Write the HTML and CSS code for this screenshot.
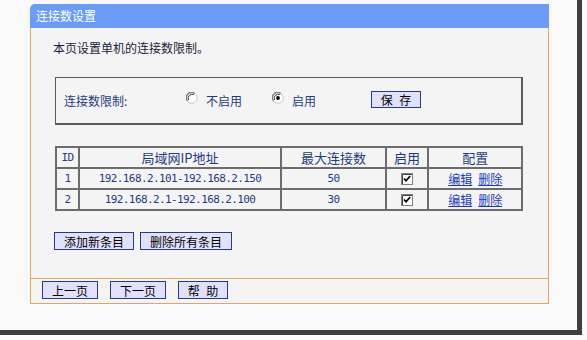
FILE: index.html
```html
<!DOCTYPE html>
<html lang="zh-CN">
<head>
  <meta charset="UTF-8" />
  <title>连接数设置</title>
  <link rel="stylesheet" href="styles.css">
</head>
<body>
  <div class="screen">
    <div class="panel">
      <div class="panel-title">连接数设置</div>

      <div class="panel-body">
        <p class="intro">本页设置单机的连接数限制。</p>

        <div class="limit-box">
          <span class="label">连接数限制:</span>
          <label class="radio radio-off">
            <svg width="12" height="12" viewBox="0 0 12 12">
              <circle cx="6" cy="6" r="5.3" fill="#fff" stroke="#c8c8c8" stroke-width="1"/>
              <path d="M1.5 8.8 A5.2 5.2 0 0 1 8.8 1.5" fill="none" stroke="#7a7a7a" stroke-width="1.3"/>
              <path d="M2.6 7.9 A4 4 0 0 1 7.9 2.6" fill="none" stroke="#303030" stroke-width="1"/>
            </svg>
            不启用
          </label>
          <label class="radio radio-on">
            <svg width="12" height="12" viewBox="0 0 12 12">
              <circle cx="6" cy="6" r="5.3" fill="#fff" stroke="#c8c8c8" stroke-width="1"/>
              <path d="M1.5 8.8 A5.2 5.2 0 0 1 8.8 1.5" fill="none" stroke="#7a7a7a" stroke-width="1.3"/>
              <path d="M2.6 7.9 A4 4 0 0 1 7.9 2.6" fill="none" stroke="#303030" stroke-width="1"/>
              <circle cx="6" cy="6" r="1.9" fill="#000"/>
            </svg>
            启用
          </label>
          <button class="btn btn-save">保 存</button>
        </div>

        <table class="rules">
          <tr>
            <th class="col-id">ID</th>
            <th class="col-ip">局域网IP地址</th>
            <th class="col-max">最大连接数</th>
            <th class="col-on">启用</th>
            <th class="col-cfg">配置</th>
          </tr>
          <tr>
            <td class="num">1</td>
            <td class="num">192.168.2.101-192.168.2.150</td>
            <td class="num">50</td>
            <td><span class="check"><svg width="12" height="12" viewBox="0 0 12 12"><rect x="0.5" y="0.5" width="11" height="11" fill="#fff" stroke="#808080"/><path d="M1.5 11 V1.5 H11" fill="none" stroke="#404040"/><path d="M3 5.5 L5 7.8 L9.2 3" fill="none" stroke="#000" stroke-width="1.7"/></svg></span></td>
            <td><a href="#">编辑</a><a href="#" class="link-del">删除</a></td>
          </tr>
          <tr>
            <td class="num">2</td>
            <td class="num">192.168.2.1-192.168.2.100</td>
            <td class="num">30</td>
            <td><span class="check"><svg width="12" height="12" viewBox="0 0 12 12"><rect x="0.5" y="0.5" width="11" height="11" fill="#fff" stroke="#808080"/><path d="M1.5 11 V1.5 H11" fill="none" stroke="#404040"/><path d="M3 5.5 L5 7.8 L9.2 3" fill="none" stroke="#000" stroke-width="1.7"/></svg></span></td>
            <td><a href="#">编辑</a><a href="#" class="link-del">删除</a></td>
          </tr>
        </table>

        <div class="actions">
          <button class="btn btn-add">添加新条目</button>
          <button class="btn btn-clear">删除所有条目</button>
        </div>
      </div>

      <div class="panel-foot">
        <button class="btn btn-nav">上一页</button>
        <button class="btn btn-nav">下一页</button>
        <button class="btn btn-help">帮 助</button>
      </div>
    </div>
  </div>
</body>
</html>
```

FILE: styles.css
```css
body {
  margin: 0;
  padding: 0;
  background-color: #f9f9f9;
  font-family: "Noto Sans CJK SC", "Liberation Sans", sans-serif;
  font-size: 12px;
}
.screen {
  width: 582px;
  height: 335px;
  padding-top: 4px;
  box-sizing: border-box;
  background-color: #f9f9f9;
  border-right: 5px solid #3e3e3e;
  border-bottom: 5px solid #3e3e3e;
}
.panel {
  width: 519px;
  margin-left: 30px;
}
.panel-title {
  height: 24px;
  line-height: 24px;
  padding-left: 6px;
  background-color: #6a9cfb;
  border-top-left-radius: 5px;
  color: #fff;
  font-size: 12px;
}
.panel-body {
  height: 250px;
  box-sizing: border-box;
  padding: 12px 0 0 22px;
  background-color: #f4f4f4;
  border-left: 1px solid #e9a55c;
  border-right: 1px solid #e9a55c;
}
.intro {
  margin: 0;
  line-height: 16px;
  color: #1c1c3c;
}
.limit-box {
  display: flex;
  align-items: center;
  width: 468px;
  height: 48px;
  box-sizing: border-box;
  margin: 21px 0 0 2px;
  padding-left: 8px;
  border: 1px solid #5a5a5a;
  border-right-width: 2px;
  border-bottom-width: 2px;
  color: #1e3a86;
}
.label {
  width: 122px;
}
.radio {
  display: flex;
  align-items: center;
  gap: 8px;
}
.radio svg {
  margin-top: -5px;
}
.radio-off {
  width: 86px;
}
.radio-on {
  width: 99px;
}
.btn {
  height: 18px;
  padding: 0;
  background-color: #e0e2fb;
  border: 1px solid #26398a;
  color: #000;
  font-family: "Noto Sans CJK SC", sans-serif;
  font-size: 12px;
  line-height: 15px;
  cursor: pointer;
}
.btn-save {
  width: 50px;
  height: 17px;
  margin-top: -3px;
  word-spacing: 4px;
}
.rules {
  width: 468px;
  margin: 21px 0 0 2px;
  border-collapse: collapse;
  color: #1e3a86;
}
.rules th,
.rules td {
  height: 19px;
  padding: 0;
  border: 2px solid #6c6c6c;
  text-align: center;
  font-weight: normal;
}
.rules th {
  font-size: 13px;
}
.col-id { width: 21px; }
.col-ip { width: 201px; }
.col-max { width: 103px; }
.col-on { width: 41px; }
.col-cfg { width: 92px; }
.rules th.col-id,
.num {
  font-family: "DejaVu Sans Mono", monospace;
  font-size: 11px;
  letter-spacing: -0.6px;
}
.check {
  display: inline-block;
  height: 12px;
  vertical-align: -1px;
}
.rules a {
  color: #1a3cc8;
  text-decoration: underline;
}
.rules a.link-del {
  margin-left: 6px;
}
.actions {
  display: flex;
  gap: 6px;
  margin: 21px 0 0 1px;
}
.btn-add {
  width: 80px;
}
.btn-clear {
  width: 92px;
}
.panel-foot {
  display: flex;
  gap: 12px;
  height: 26px;
  box-sizing: border-box;
  padding: 2px 0 0 11px;
  background-color: #f4f4f4;
  border: 1px solid #e9a55c;
}
.btn-nav {
  width: 56px;
}
.btn-help {
  width: 50px;
  word-spacing: 4px;
}
```
